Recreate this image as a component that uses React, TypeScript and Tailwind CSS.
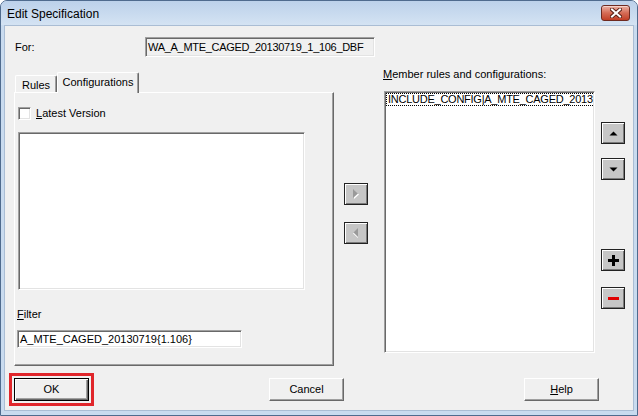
import React from 'react';

const sunken =
  'border border-t-[#a0a0a0] border-l-[#a0a0a0] border-r-white border-b-white shadow-[inset_1px_1px_0_#696969,inset_-1px_-1px_0_#e3e3e3]';

const smallBtn =
  'w-[24px] h-[22px] bg-[#c6c6c6] border border-[#222] shadow-[inset_1px_1px_0_#fff,inset_-1px_-1px_0_#7a7a7a] flex items-center justify-center';

const dlgBtn =
  'w-[75px] h-[23px] bg-[#f0f0f0] border border-t-white border-l-white border-r-[#696969] border-b-[#696969] shadow-[inset_-1px_-1px_0_#a0a0a0] flex items-center justify-center';

const App: React.FC = () => {
  return (
    <div className="w-[638px] h-[416px] flex flex-col bg-[#c9dbef] border border-[#4f6b8e] rounded-t-[7px] px-[3px] pb-[4px] font-['Liberation_Sans',Arial,sans-serif] text-[11px] leading-[13px] text-black overflow-hidden">
      {/* Title bar */}
      <div className="h-[24px] shrink-0 flex items-start justify-between bg-gradient-to-b from-[#bcd1ea] to-[#d4e3f3] -mx-[3px] px-[6px]">
        <span className="mt-[6px] text-[12px] leading-[14px] text-black">Edit Specification</span>
        <button className="mt-[4px] mr-[1px] w-[29px] h-[16px] rounded-[3px] border border-[#6e2a20] bg-gradient-to-b from-[#eab0a3] via-[#d56b55] to-[#c13e25] shadow-[inset_0_1px_0_#f5d3ca] flex items-center justify-center">
          <svg width="12" height="10" viewBox="0 0 12 10">
            <path d="M2 1.5 L10 8.5 M10 1.5 L2 8.5" stroke="#5a2218" strokeWidth="4" strokeLinecap="square" />
            <path d="M2 1.5 L10 8.5 M10 1.5 L2 8.5" stroke="#ffffff" strokeWidth="2" strokeLinecap="square" />
          </svg>
        </button>
      </div>

      {/* Client area */}
      <div className="flex-1 bg-[#f0f0f0] border border-[#aabdd4] flex flex-col">
        {/* For row */}
        <div className="mt-[11px] h-[20px] flex items-center pl-[10px]">
          <span className="w-[130px]">For:</span>
          <div className={`w-[230px] h-[20px] bg-[#f0f0f0] ${sunken} flex items-center pl-[2px] whitespace-nowrap tracking-[-0.3px]`}>
            WA_A_MTE_CAGED_20130719_1_106_DBF
          </div>
        </div>

        {/* Main row */}
        <div className="mt-[9px] flex items-start pl-[9px]">
          {/* Tab control */}
          <div className="mt-[6px] w-[320px] flex flex-col">
            <div className="flex items-end h-[20px]">
              <div className="ml-[1px] w-[42px] h-[17px] border border-b-0 border-t-white border-l-white border-r-[#696969] rounded-t-[2px] shadow-[inset_-1px_0_0_#a0a0a0] flex items-start justify-center pt-[3px]">
                Rules
              </div>
              <div className="relative z-10 -mb-[1px] w-[82px] h-[21px] bg-[#f0f0f0] border border-b-0 border-t-white border-l-white border-r-[#696969] rounded-t-[2px] shadow-[inset_-1px_0_0_#a0a0a0] flex items-start justify-center pt-[3px]">
                Configurations
              </div>
            </div>
            <div className="h-[274px] border border-t-white border-l-white border-r-[#696969] border-b-[#696969] shadow-[inset_-1px_-1px_0_#a0a0a0] pl-[2px] flex flex-col">
              <div className="mt-[14px] ml-[1px] flex items-center">
                <div className={`w-[13px] h-[13px] bg-white ${sunken}`} />
                <span className="ml-[5px]">
                  <u>L</u>atest Version
                </span>
              </div>
              <div className={`mt-[12px] ml-[1px] w-[287px] h-[158px] bg-white ${sunken}`} />
              <div className="mt-[18px]">
                <u>F</u>ilter
              </div>
              <div className={`mt-[9px] w-[225px] h-[18px] bg-white ${sunken} flex items-center pl-[2px] whitespace-nowrap`}>
                A_MTE_CAGED_20130719{'{'}1.106{'}'}
              </div>
            </div>
          </div>

          {/* Move buttons */}
          <div className="ml-[10px] mt-[117px] flex flex-col gap-[17px]">
            <div className={smallBtn}>
              <svg width="8" height="11" viewBox="0 0 8 11">
                <polygon points="2,1 7,5.5 2,10" fill="#ffffff" />
                <polygon points="1,0 6,4.5 1,9" fill="#9a9a9a" />
              </svg>
            </div>
            <div className={smallBtn}>
              <svg width="8" height="11" viewBox="0 0 8 11">
                <polygon points="6,1 1,5.5 6,10" fill="#ffffff" />
                <polygon points="6,0 1.5,4.5 6,9" fill="#9a9a9a" />
              </svg>
            </div>
          </div>

          {/* Member list */}
          <div className="ml-[15px] w-[212px] flex flex-col">
            <div className="mt-[2px]">
              <u>M</u>ember rules and configurations:
            </div>
            <div className={`mt-[10px] ml-[1px] w-[211px] h-[262px] bg-white ${sunken} pt-[1px] pl-[1px] overflow-hidden`}>
              <div className="h-[13px] w-[209px] border border-dotted border-black border-r-0 pl-[1px] whitespace-nowrap leading-[11px] tracking-[-0.25px]">
                INCLUDE_CONFIG|A_MTE_CAGED_2013
              </div>
            </div>
          </div>

          {/* Order buttons */}
          <div className="ml-[6px] mt-[56px] flex flex-col">
            <div className={smallBtn}>
              <svg width="9" height="5" viewBox="0 0 9 5">
                <polygon points="0.5,4.5 4.5,0.5 8.5,4.5" fill="#000" />
              </svg>
            </div>
            <div className={`${smallBtn} mt-[14px]`}>
              <svg width="9" height="5" viewBox="0 0 9 5">
                <polygon points="0.5,0.5 8.5,0.5 4.5,4.5" fill="#000" />
              </svg>
            </div>
            <div className={`${smallBtn} mt-[69px]`}>
              <svg width="11" height="11" viewBox="0 0 11 11">
                <rect x="4" y="0" width="3" height="11" fill="#000" />
                <rect x="0" y="4" width="11" height="3" fill="#000" />
              </svg>
            </div>
            <div className={`${smallBtn} mt-[16px]`}>
              <svg width="11" height="3" viewBox="0 0 11 3">
                <rect x="0" y="0" width="11" height="3" fill="#e00000" />
              </svg>
            </div>
          </div>
        </div>

        {/* Bottom buttons */}
        <div className="mt-[7px] flex items-center pl-[4px]">
          <div className="border-[3px] border-[#e0262b] p-[2px]">
            <div className="w-[75px] h-[23px] bg-[#f0f0f0] border border-black shadow-[inset_1px_1px_0_#fff,inset_-1px_-1px_0_#696969,inset_-2px_-2px_0_#a0a0a0] flex items-center justify-center">
              OK
            </div>
          </div>
          <div className={`${dlgBtn} ml-[175px]`}>Cancel</div>
          <div className={`${dlgBtn} ml-[180px]`}>
            <span>
              <u>H</u>elp
            </span>
          </div>
        </div>
      </div>
    </div>
  );
};

export default App;
